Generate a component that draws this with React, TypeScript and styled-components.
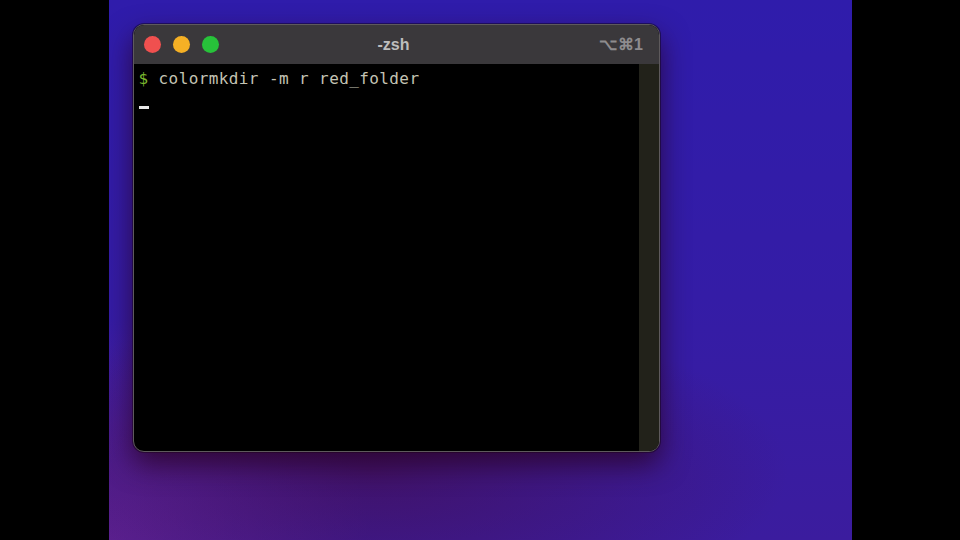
import React from "react";
import styled, { createGlobalStyle } from "styled-components";

const Global = createGlobalStyle`
  html, body { margin: 0; padding: 0; background: #000; }
  #root { width: 960px; height: 540px; overflow: hidden; }
`;

const Screen = styled.div`
  width: 960px;
  height: 540px;
  display: flex;
  justify-content: center;
  background: #000;
`;

const Desktop = styled.div`
  width: 743px;
  height: 540px;
  box-sizing: border-box;
  padding: 24px 0 0 24px;
  background:
    radial-gradient(ellipse 420px 160px at 260px 470px, rgba(70, 10, 60, 0.55), rgba(70, 10, 60, 0) 100%),
    radial-gradient(ellipse 260px 220px at 0px 540px, rgba(120, 40, 150, 0.55), rgba(120, 40, 150, 0) 100%),
    linear-gradient(180deg, #2f1cab 0%, #341ca6 55%, #3b1c9e 100%);
`;

const Window = styled.div`
  width: 527px;
  height: 428px;
  box-sizing: border-box;
  border: 1px solid #5e5a5c;
  border-radius: 11px;
  overflow: hidden;
  display: flex;
  flex-direction: column;
  background: #000;
  box-shadow: 0 12px 28px rgba(40, 0, 30, 0.75), 0 0 0 1px rgba(0, 0, 0, 0.4);
`;

const TitleBar = styled.div`
  height: 39px;
  flex: none;
  display: grid;
  grid-template-columns: 1fr auto 1fr;
  align-items: center;
  padding: 0 15px 0 10px;
  background: #3a383b;
  font-family: "Liberation Sans", Arial, sans-serif;
`;

const Lights = styled.div`
  display: flex;
  gap: 12px;
  align-items: center;
`;

const Light = styled.span<{ $c: string }>`
  width: 17px;
  height: 17px;
  border-radius: 50%;
  background: ${(p) => p.$c};
`;

const Title = styled.div`
  font-weight: bold;
  font-size: 16px;
  color: #bdbdbd;
`;

const Shortcut = styled.div`
  justify-self: end;
  font-size: 16px;
  font-weight: bold;
  color: #8e8c8e;
  letter-spacing: 0.5px;
`;

const Body = styled.div`
  flex: 1;
  display: flex;
`;

const Term = styled.div`
  flex: 1;
  padding: 3px 0 0 5px;
  font-family: "DejaVu Sans Mono", "Liberation Mono", monospace;
  font-size: 16px;
  line-height: 24px;
  letter-spacing: 0.4px;
  color: #c4c4b4;
`;

const Line = styled.div`
  white-space: pre;
`;

const Prompt = styled.span`
  color: #79b52e;
`;

const Cursor = styled.span`
  display: inline-block;
  width: 10px;
  height: 3px;
  background: #e8e8e8;
  vertical-align: -1px;
`;

const Scroll = styled.div`
  width: 20px;
  flex: none;
  background: #22221a;
`;

export default function App() {
  return (
    <Screen>
      <Global />
      <Desktop>
        <Window>
          <TitleBar>
            <Lights>
              <Light $c="#f0504f" />
              <Light $c="#f5b025" />
              <Light $c="#27c23a" />
            </Lights>
            <Title>-zsh</Title>
            <Shortcut>⌥⌘1</Shortcut>
          </TitleBar>
          <Body>
            <Term>
              <Line>
                <Prompt>$</Prompt> colormkdir -m r red_folder
              </Line>
              <Line>
                <Cursor />
              </Line>
            </Term>
            <Scroll />
          </Body>
        </Window>
      </Desktop>
    </Screen>
  );
}
